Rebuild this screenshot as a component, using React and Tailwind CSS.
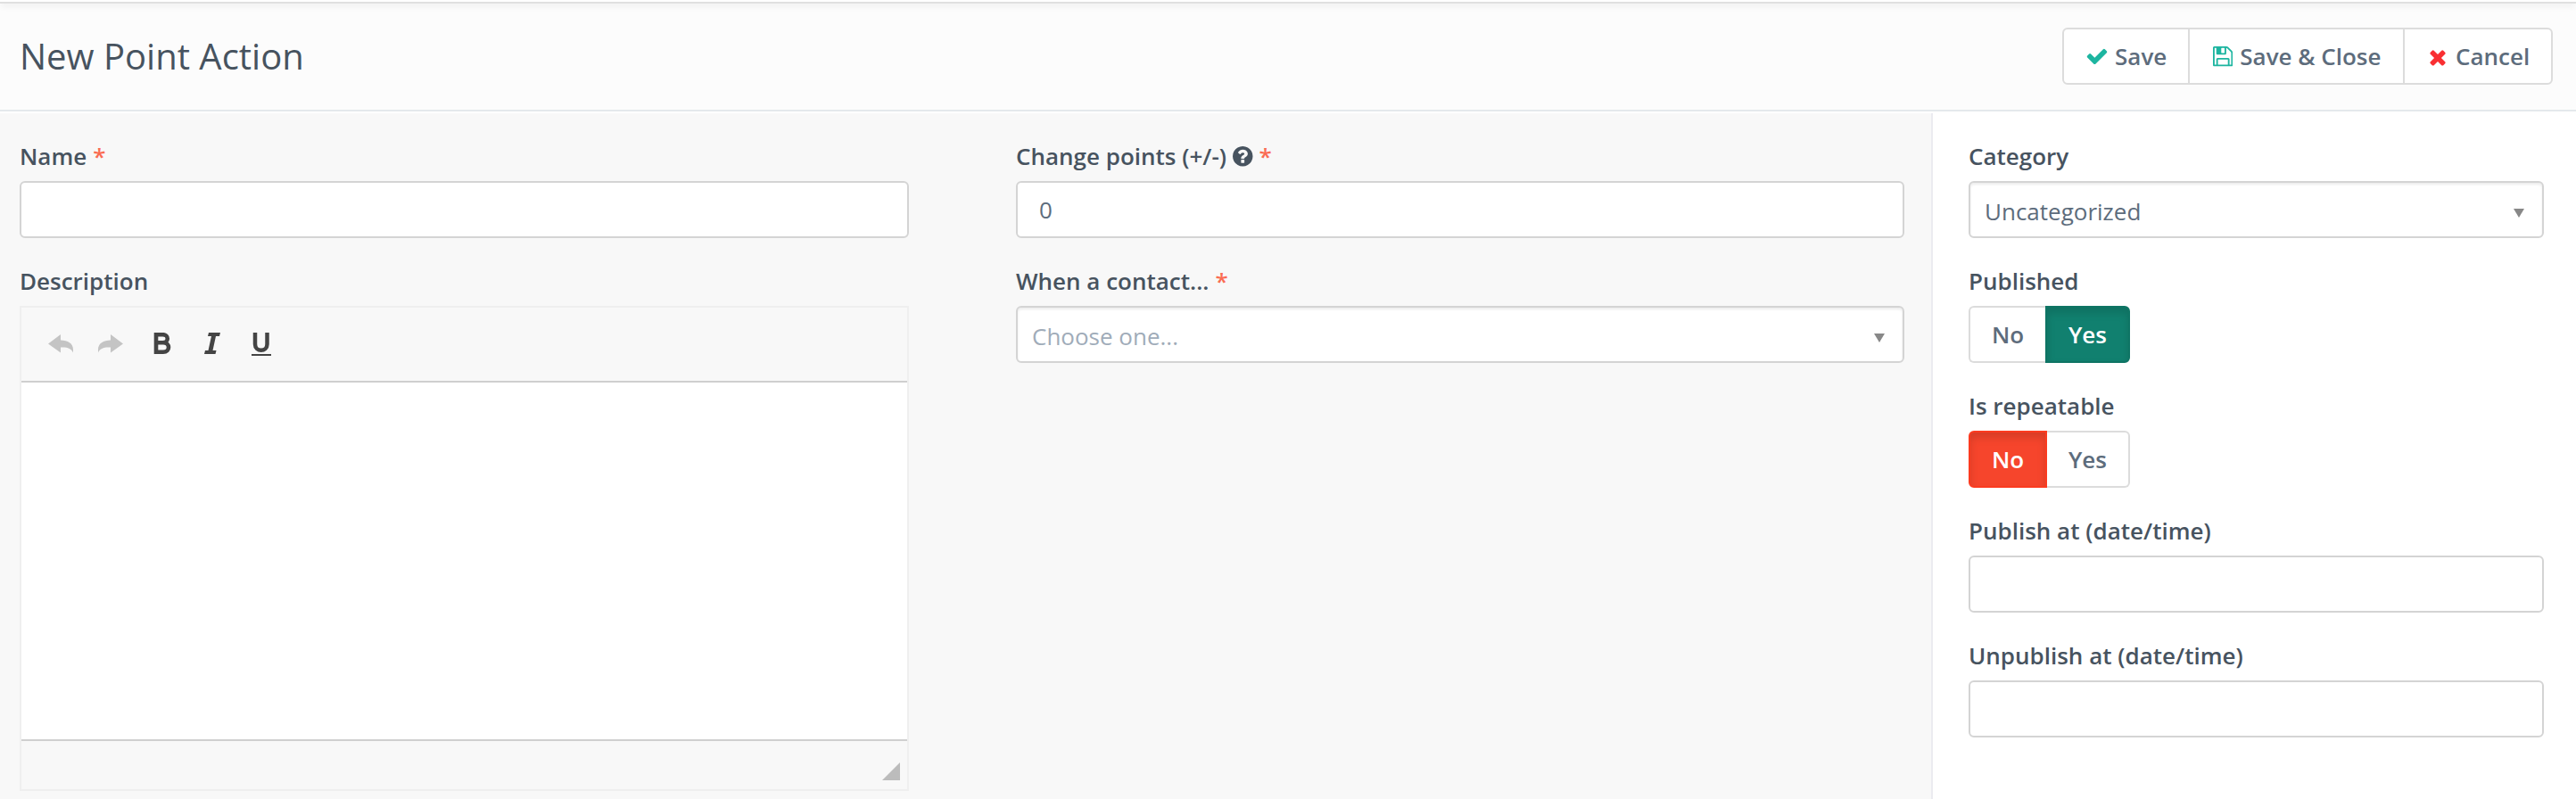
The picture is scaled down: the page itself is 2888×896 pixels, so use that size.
import React from "react";

const LABEL = "flex h-[33px] items-center text-[26px] leading-[33px] font-semibold text-[#47535f]";

function Icon({ d, box = "0 0 1792 1792", className }) {
  return (
    <svg viewBox={box} className={className} fill="currentColor" aria-hidden="true">
      <path d={d} />
    </svg>
  );
}

const CHECK =
  "M1671 566q0 40-28 68l-724 724-136 136q-28 28-68 28t-68-28l-136-136-362-362q-28-28-28-68t28-68l136-136q28-28 68-28t68 28l294 295 656-657q28-28 68-28t68 28l136 136q28 28 28 68z";
const TIMES =
  "M1490 1322q0 40-28 68l-136 136q-28 28-68 28t-68-28l-294-294-294 294q-28 28-68 28t-68-28l-136-136q-28-28-28-68t28-68l294-294-294-294q-28-28-28-68t28-68l136-136q28-28 68-28t68 28l294 294 294-294q28-28 68-28t68 28l136 136q28 28 28 68t-28 68l-294 294 294 294q28 28 28 68z";
const FLOPPY =
  "M384 1536h768v-384h-768v384zM1280 1536h128v-896q0-14-10-38.500t-20-34.500l-281-281q-10-10-34-20t-39-10v416q0 40-28 68t-68 28h-576q-40 0-68-28t-28-68v-416h-128v1280h128v-416q0-40 28-68t68-28h832q40 0 68 28t28 68v416zM896 608v-320q0-13-9.500-22.500t-22.500-9.500h-192q-13 0-22.500 9.500t-9.500 22.500v320q0 13 9.500 22.500t22.500 9.500h192q13 0 22.500-9.500t9.500-22.500zM1536 640v928q0 40-28 68t-68 28h-1344q-40 0-68-28t-28-68v-1344q0-40 28-68t68-28h928q40 0 88 20t76 48l280 280q28 28 48 76t20 88z";
const QUESTION =
  "M1024 1376v-192q0-14-9-23t-23-9h-192q-14 0-23 9t-9 23v192q0 14 9 23t23 9h192q14 0 23-9t9-23zm256-672q0-88-55.500-163t-138.500-116-170-41q-243 0-371 213-15 24 8 42l132 100q7 6 19 6 16 0 25-12 53-68 86-92 34-24 86-24 48 0 85.500 26t37.500 59q0 38-20 61t-68 45q-63 28-115.500 86.500t-52.500 125.500v36q0 14 9 23t23 9h192q14 0 23-9t9-23q0-19 21.500-49.500t54.500-49.500q32-18 49-28.500t46-35 44.500-48 28-60.500 12.500-81zm384 192q0 209-103 385.500t-279.500 279.500-385.500 103-385.500-103-279.500-279.500-103-385.500 103-385.500 279.500-279.500 385.500-103 385.500 103 279.500 279.500 103 385.500z";

function Star() {
  return <span className="ml-[7px] text-[#fa6c53]">*</span>;
}

function Field({ label, required, help, children }) {
  return (
    <div className="flex h-[140px] flex-col gap-[11px]">
      <div className={LABEL}>
        <span>{label}</span>
        {help && <Icon d={QUESTION} box="128 128 1536 1536" className="ml-[7px] h-[22.500px] w-[22.500px]" />}
        {required && <Star />}
      </div>
      {children}
    </div>
  );
}

function TextBox({ value }) {
  return (
    <div className="flex h-16 shrink-0 items-center rounded-md border-2 border-[#d4d4d4] bg-white px-6 text-[26px] text-[#5d6c7c]">
      {value}
    </div>
  );
}

function Select({ value, placeholder }) {
  return (
    <div className="flex h-16 shrink-0 items-center justify-between rounded-md border-2 border-[#d4d4d4] bg-white pr-5 pl-4 text-[26px] shadow-[inset_0_2px_3px_rgba(0,0,0,0.08)]">
      <span className={placeholder ? "pt-1 text-[#a0acb9]" : "pt-1 text-[#5d6c7c]"}>{value}</span>
      <svg viewBox="0 0 12 10" className="mt-2 h-[10px] w-3" fill="#888888">
        <path d="M0 0h12L6 10z" />
      </svg>
    </div>
  );
}

function Toggle({ on }) {
  return (
    <div className="flex h-16 w-[181px] shrink-0 text-[26px] font-semibold">
      <div
        className={
          on
            ? "flex w-[86px] items-center justify-center rounded-l-md border-2 border-r-0 border-[#dcdcdc] bg-white text-[#5d6c7c]"
            : "flex w-[88px] items-center justify-center rounded-l-md border-2 border-[#fb3b20] bg-[#f6452c] text-white shadow-[inset_0_6px_10px_rgba(0,0,0,0.125)]"
        }
      >
        No
      </div>
      <div
        className={
          on
            ? "flex flex-1 items-center justify-center rounded-r-md border-2 border-[#0e7464] bg-[#11806f] text-white shadow-[inset_0_6px_10px_rgba(0,0,0,0.125)]"
            : "flex flex-1 items-center justify-center rounded-r-md border-2 border-l-0 border-[#dcdcdc] bg-white text-[#5d6c7c]"
        }
      >
        Yes
      </div>
    </div>
  );
}

function Editor() {
  return (
    <div className="flex h-[544px] shrink-0 flex-col border-2 border-[#efefef] bg-[#f8f8f8]">
      <div className="flex h-[84px] shrink-0 items-start border-b-2 border-[#cfcfcf] pt-7 text-[#444444]">
        <svg viewBox="0 0 28 21" className="mt-0.5 ml-[30px] h-[21px] w-7 text-[#c4c4c4]" fill="currentColor">
          <path d="M0 10.500L14 0v6.500C22 6.500 28 10 28 17v3.500C26 15.500 21 14 14 14.500V20.500z" />
        </svg>
        <svg viewBox="0 0 28 21" className="mt-0.5 ml-7 h-[21px] w-7 text-[#c4c4c4]" fill="currentColor">
          <path d="M28 10.500L14 0v6.500C6 6.500 0 10 0 17v3.500C2 15.500 7 14 14 14.500V20.500z" />
        </svg>
        <svg viewBox="0 0 20 24" className="ml-[34px] h-6 w-5" fill="none" stroke="currentColor" strokeWidth="4.600">
          <path d="M3 2.200h7.500c7 0 7 9 0 9H3h8c8 0 8 10.500 0 10.500H3zV2.200" />
        </svg>
        <svg viewBox="0 0 18 24" className="ml-[37px] h-6 w-[18px]" fill="currentColor">
          <path d="M5 0h13l-1 4h-4L9.500 20h4l-1 4H0l1-4h3.500L8 4H4z" />
        </svg>
        <svg viewBox="0 0 22 26" className="ml-[35px] h-[26px] w-[22px]" fill="none" stroke="currentColor">
          <path d="M4 0v13c0 9 13.500 9 13.500 0V0" strokeWidth="4.500" />
          <path d="M0 25h22" strokeWidth="2" />
        </svg>
      </div>
      <div className="flex-1 bg-white" />
      <div className="flex h-[56px] shrink-0 items-end justify-end border-t-2 border-[#cfcfcf] pr-2 pb-[10px]">
        <svg viewBox="0 0 20 20" className="h-5 w-5" fill="#bcbcbc">
          <path d="M20 0v20H0z" />
        </svg>
      </div>
    </div>
  );
}

export default function App() {
  return (
    <div className="flex h-[896px] w-[2888px] flex-col overflow-hidden bg-white font-['Open_Sans','Noto_Sans',sans-serif]">
      <div className="z-10 h-1 shrink-0 border-b-2 border-[#e0e0e0] bg-white shadow-[0_3px_7px_-1px_rgba(0,0,0,0.14)]" />
      <header className="flex h-[121px] shrink-0 items-start justify-between border-b-2 border-[#e4e9ec] bg-[#fcfcfc] pt-[27px] pr-[26px] pl-[22px]">
        <h1 className="pt-[5px] text-[40px] leading-[54px] text-[#47535f]">New Point Action</h1>
        <div className="flex h-16 w-[550px] rounded-md border-2 border-[#dcdcdc] bg-white text-[26px] font-semibold text-[#5d6c7c]">
          <div className="flex w-[141px] items-center border-r-2 border-[#dcdcdc] pl-6">
            <Icon d={CHECK} className="mr-[7px] h-[26px] w-[26px] text-[#1db5a0]" />
            Save
          </div>
          <div className="flex w-[241px] items-center border-r-2 border-[#dcdcdc] pl-[26px]">
            <Icon d={FLOPPY} box="0 128 1536 1536" className="mt-px mr-2 h-[22.300px] w-[22.300px] text-[#1db5a0]" />
            Save &amp; Close
          </div>
          <div className="flex flex-1 items-center pl-6">
            <Icon d={TIMES} className="mt-px mr-[7px] h-[26px] w-[26px] text-[#f92f32]" />
            Cancel
          </div>
        </div>
      </header>
      <div className="mt-0.5 flex flex-1">
        <main className="flex w-[2167px] gap-[120px] border-r-2 border-[#ebebf0] bg-[#f8f8f8] pt-8 pl-[22px]">
          <div className="w-[997px]">
            <Field label="Name" required>
              <TextBox />
            </Field>
            <Field label="Description">
              <Editor />
            </Field>
          </div>
          <div className="w-[996px]">
            <Field label="Change points (+/-)" help required>
              <TextBox value="0" />
            </Field>
            <Field label="When a contact..." required>
              <Select value="Choose one..." placeholder />
            </Field>
          </div>
        </main>
        <aside className="flex-1 pt-8 pr-9 pl-10">
          <Field label="Category">
            <Select value="Uncategorized" />
          </Field>
          <Field label="Published">
            <Toggle on />
          </Field>
          <Field label="Is repeatable">
            <Toggle />
          </Field>
          <Field label="Publish at (date/time)">
            <TextBox />
          </Field>
          <Field label="Unpublish at (date/time)">
            <TextBox />
          </Field>
        </aside>
      </div>
    </div>
  );
}
